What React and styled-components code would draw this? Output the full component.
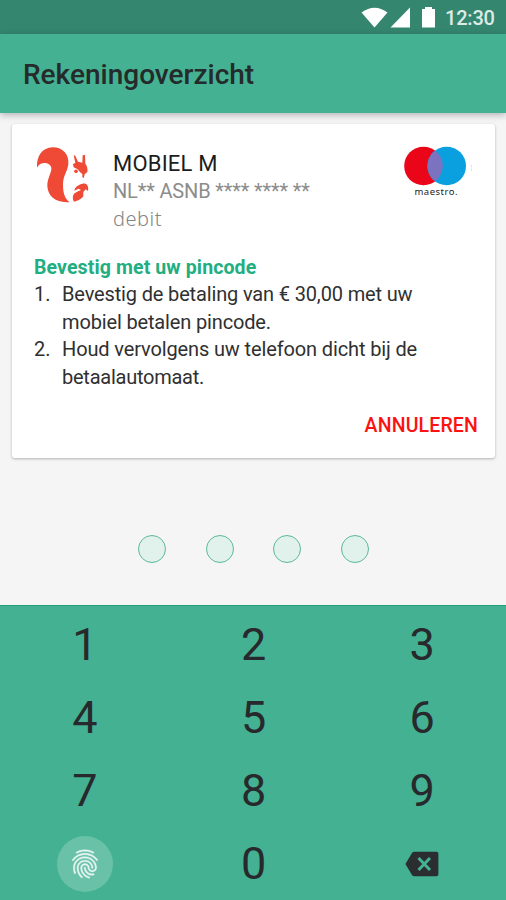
import React from "react";
import styled, { createGlobalStyle } from "styled-components";
import { MdFingerprint } from "react-icons/md";

const GlobalStyle = createGlobalStyle`
  * { box-sizing: border-box; }
  body { margin: 0; background: #f5f5f5; }
`;

const Screen = styled.div`
  width: 506px;
  height: 900px;
  display: flex;
  flex-direction: column;
  overflow: hidden;
  background: #f5f5f5;
  font-family: Roboto, sans-serif;
  color: #1f2124;
`;

const StatusBar = styled.div`
  height: 34px;
  flex: none;
  display: flex;
  justify-content: flex-end;
  background: #34866f;
`;

const StatusIcons = styled.svg`
  width: 80px;
  height: 34px;
  display: block;
`;

const Clock = styled.span`
  width: 66px;
  padding-left: 5px;
  font-size: 20px;
  font-weight: 500;
  line-height: 36px;
  letter-spacing: -0.2px;
  color: #dcebe6;
`;

const TitleBar = styled.header`
  height: 79px;
  flex: none;
  display: flex;
  align-items: center;
  padding: 3px 0 0 23px;
  background: #44b192;
  box-shadow: 0 2px 7px rgba(0, 0, 0, 0.28);
`;

const Title = styled.h1`
  margin: 0;
  font-size: 28px;
  line-height: 32px;
  font-weight: 500;
  white-space: nowrap;
  color: #252a2b;
`;

const Card = styled.section`
  height: 334px;
  flex: none;
  margin: 11px 11px 0 12px;
  background: #fff;
  border-radius: 3px;
  box-shadow: 0 1px 3px rgba(0, 0, 0, 0.28);
  display: flex;
  flex-direction: column;
`;

const Account = styled.div`
  height: 130px;
  flex: none;
  display: grid;
  grid-template-columns: 78px 1fr 70px;
  padding: 21px 23px 0;
`;

const SquirrelLogo = styled.svg`
  width: 55px;
  height: 59px;
  display: block;
`;

const AccountText = styled.div`
  display: flex;
  flex-direction: column;
  padding-top: 4px;
`;

const AccountLine = styled.span`
  font-size: ${(p) => p.$size}px;
  line-height: ${(p) => p.$height}px;
  letter-spacing: ${(p) => p.$spacing}px;
  color: ${(p) => p.$color};
  white-space: nowrap;
`;

const CardType = styled(AccountLine)`
  font-family: "Noto Sans", sans-serif;
  font-weight: 300;
`;

const Maestro = styled.svg`
  width: 70px;
  height: 52px;
  display: block;
`;

const Heading = styled.h2`
  margin: 0;
  padding-left: 22px;
  font-size: 19.5px;
  line-height: 27px;
  font-weight: 700;
  letter-spacing: ${(p) => p.$spacing}px;
  color: #21ae80;
`;

const Steps = styled.ol`
  margin: 0;
  padding: 0 0 0 22px;
  list-style: none;
`;

const Step = styled.li`
  display: grid;
  grid-template-columns: 28px 1fr;
  font-size: 20px;
  line-height: 27.7px;
  color: #303030;
`;

const Line = styled.span`
  display: block;
  white-space: nowrap;
  letter-spacing: ${(p) => p.$spacing}px;
`;

const CancelButton = styled.button`
  align-self: flex-end;
  margin: 21px 17px 0 0;
  padding: 0;
  border: 0;
  background: none;
  font: 500 19.5px/26px Roboto, sans-serif;
  letter-spacing: ${(p) => p.$spacing}px;
  color: #fb1212;
`;

const PinDots = styled.div`
  height: 147px;
  flex: none;
  display: flex;
  gap: 39.5px;
  padding: 77px 0 0 138px;
`;

const Dot = styled.span`
  width: 28px;
  height: 28px;
  border: 1.5px solid #5db99b;
  border-radius: 50%;
  background: #e1f1eb;
`;

const Keypad = styled.div`
  height: 295px;
  flex: none;
  display: grid;
  grid-template-columns: repeat(3, 168.7px);
  grid-auto-rows: 73px;
  padding: 1px 0 0 0.5px;
  background: #44b192;
  border-top: 1px solid #259d78;
`;

const Key = styled.button`
  display: flex;
  align-items: center;
  justify-content: center;
  padding: 2px 0 0;
  border: 0;
  background: none;
  font: 400 45px/52px Roboto, sans-serif;
  color: #27292c;
`;

const FingerprintDisc = styled.span`
  width: 56px;
  height: 56px;
  border-radius: 50%;
  display: flex;
  align-items: center;
  justify-content: center;
  background: #69c1a8;
  color: #e8f6f1;
`;

const FingerprintIcon = styled(MdFingerprint)`
  width: 34px;
  height: 34px;
  stroke: currentColor;
  stroke-width: 0.3px;

  path[fill="none"] {
    stroke: none;
  }
`;

const BackspaceIcon = styled.svg`
  width: 34px;
  height: 26px;
  display: block;
`;

const digits = ["1", "2", "3", "4", "5", "6", "7", "8", "9"];

export default function App() {
  return (
    <Screen>
      <GlobalStyle />
      <StatusBar>
        <StatusIcons viewBox="360 0 80 34" fill="#fff">
          <path d="M361.5 12.5Q374.5 3 387.5 12.5L374.5 27.5Z" />
          <path d="M410 7.5V27.5H390.5Z" />
          <path d="M422 9H425V7H432V9H435V27.5H422Z" />
        </StatusIcons>
        <Clock>12:30</Clock>
      </StatusBar>
      <TitleBar>
        <Title>Rekeningoverzicht</Title>
      </TitleBar>
      <Card>
        <Account>
          <SquirrelLogo viewBox="45 30 165 177" fill="#ee4a35">
            <path d="M51 98C49 64 66 38 98 37C130 37 148 60 145 88C142 111 129 123 129 149C129 176 136 193 149 201C112 205 84 187 82 154C81 130 96 112 94 98C91 82 62 76 51 98Z" />
            <path d="M161 61L166 62L174 80L187 83L188 61L195 60L196 86Q204 96 202 111L194 118L191 130L187 126L187 117Q179 112 173 103L161 97L159 88L166 83Z" />
            <circle cx="168" cy="109" r="5.5" />
            <path d="M204 168C207 152 199 144 188 146C175 148 164 157 163 167L176 161L183 165L171 170L162 176Q155 188 162 200Q182 196 190 184L190 171L197 163Z" />
          </SquirrelLogo>
          <AccountText>
            <AccountLine $size={22} $height={29} $spacing={0.2} $color="#1c1c1c">MOBIEL M</AccountLine>
            <AccountLine $size={20} $height={27} $spacing={-0.15} $color="#8c8c8c">NL** ASNB **** **** **</AccountLine>
            <CardType $size={20} $height={27} $spacing={0.5} $color="#858585">debit</CardType>
          </AccountText>
          <Maestro viewBox="402 145 70 52">
            <circle cx="423.5" cy="166" r="19.3" fill="#ea0518" />
            <circle cx="446.7" cy="166" r="19.3" fill="#0aa0df" />
            <path d="M435.1 150.6A19.3 19.3 0 0 1 435.1 181.4A19.3 19.3 0 0 1 435.1 150.6Z" fill="#7b73bf" />
            <text x="414.5" y="194.5" fontFamily="Noto Sans, sans-serif" fontSize="9.5" fontWeight="400" textLength="43" fill="#222">maestro.</text>
            <path d="M471.5 165Q473 168 471.5 171" fill="none" stroke="#b9e3f4" strokeWidth="1" />
          </Maestro>
        </Account>
        <Heading $spacing={0.12}>Bevestig met uw pincode</Heading>
        <Steps>
          <Step>
            <span>1.</span>
            <div>
              <Line $spacing={-0.15}>Bevestig de betaling van € 30,00 met uw</Line>
              <Line $spacing={-0.15}>mobiel betalen pincode.</Line>
            </div>
          </Step>
          <Step>
            <span>2.</span>
            <div>
              <Line $spacing={-0.13}>Houd vervolgens uw telefoon dicht bij de</Line>
              <Line $spacing={-0.25}>betaalautomaat.</Line>
            </div>
          </Step>
        </Steps>
        <CancelButton $spacing={0.15}>ANNULEREN</CancelButton>
      </Card>
      <PinDots>
        <Dot />
        <Dot />
        <Dot />
        <Dot />
      </PinDots>
      <Keypad>
        {digits.map((d) => (
          <Key key={d}>{d}</Key>
        ))}
        <Key aria-label="Vingerafdruk">
          <FingerprintDisc>
            <FingerprintIcon />
          </FingerprintDisc>
        </Key>
        <Key>0</Key>
        <Key aria-label="Wissen">
          <BackspaceIcon viewBox="0 0 34 26">
            <path d="M9 0.8H31.5Q33.4 0.8 33.4 2.7V23.3Q33.4 25.2 31.5 25.2H9Q7.8 25.2 7 24L0.4 13L7 2Q7.8 0.8 9 0.8Z" fill="#2b2e30" />
            <path d="M13.5 7L25 19M25 7L13.5 19" stroke="#44b192" strokeWidth="3" />
          </BackspaceIcon>
        </Key>
      </Keypad>
    </Screen>
  );
}
